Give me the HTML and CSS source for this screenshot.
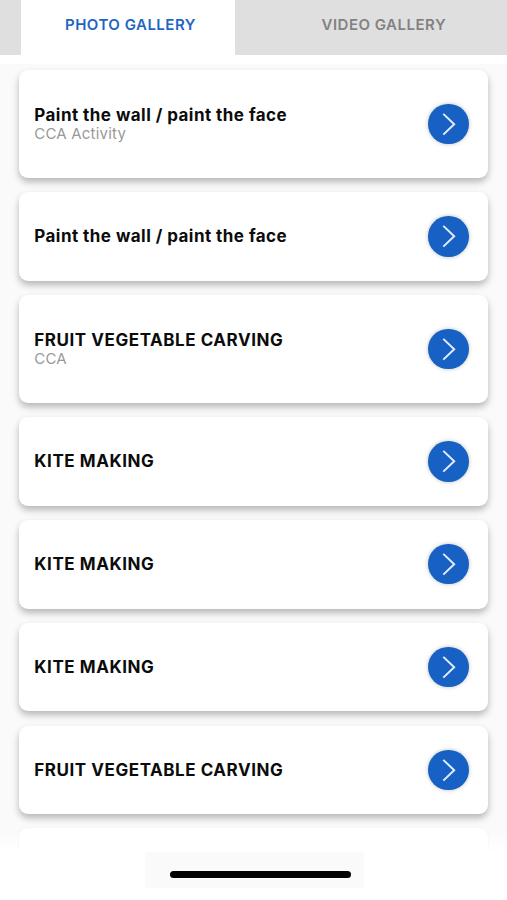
FILE: index.html
```html
<!DOCTYPE html>
<html lang="en">
<head>
  <meta charset="UTF-8" />
  <meta name="viewport" content="width=device-width, initial-scale=1.0"/>
  <title>Gallery</title>
  <link rel="stylesheet" href="styles.css">
</head>
<body>
  <nav class="tabs">
    <div class="tab active">PHOTO GALLERY</div>
    <div class="tab video">VIDEO GALLERY</div>
  </nav>

  <main class="list">
    <div class="card tall">
      <div class="info">
        <h2 class="paint">Paint the wall / paint the face</h2>
        <p>CCA Activity</p>
      </div>
      <div class="go"><svg viewBox="0 0 41 41"><path d="M15.5 10 L26.5 20.5 L15.5 31"/></svg></div>
    </div>
    <div class="card">
      <div class="info">
        <h2 class="paint">Paint the wall / paint the face</h2>
      </div>
      <div class="go"><svg viewBox="0 0 41 41"><path d="M15.5 10 L26.5 20.5 L15.5 31"/></svg></div>
    </div>
    <div class="card tall">
      <div class="info">
        <h2>FRUIT VEGETABLE CARVING</h2>
        <p>CCA</p>
      </div>
      <div class="go"><svg viewBox="0 0 41 41"><path d="M15.5 10 L26.5 20.5 L15.5 31"/></svg></div>
    </div>
    <div class="card">
      <div class="info">
        <h2>KITE MAKING</h2>
      </div>
      <div class="go"><svg viewBox="0 0 41 41"><path d="M15.5 10 L26.5 20.5 L15.5 31"/></svg></div>
    </div>
    <div class="card">
      <div class="info">
        <h2>KITE MAKING</h2>
      </div>
      <div class="go"><svg viewBox="0 0 41 41"><path d="M15.5 10 L26.5 20.5 L15.5 31"/></svg></div>
    </div>
    <div class="card">
      <div class="info">
        <h2>KITE MAKING</h2>
      </div>
      <div class="go"><svg viewBox="0 0 41 41"><path d="M15.5 10 L26.5 20.5 L15.5 31"/></svg></div>
    </div>
    <div class="card">
      <div class="info">
        <h2>FRUIT VEGETABLE CARVING</h2>
      </div>
      <div class="go"><svg viewBox="0 0 41 41"><path d="M15.5 10 L26.5 20.5 L15.5 31"/></svg></div>
    </div>
    <!-- next card, cut off by the bottom bar -->
    <div class="card last"></div>
  </main>

  <footer class="bottom">
    <div class="home"><span class="bar"></span></div>
  </footer>
</body>
</html>
```
FILE: styles.css
```css
* {
  margin: 0;
  padding: 0;
  box-sizing: border-box;
}

body {
  font-family: 'Inter', sans-serif;
  background: #fff;
  height: 100vh;
  display: flex;
  flex-direction: column;
  overflow: hidden;
}

.tabs {
  display: flex;
  flex: none;
  height: 55px;
  padding-left: 21px;
  background: #dfdfdf;
  margin-bottom: 9px;
}

.tab {
  width: 213.5px;
  padding-left: 44px;
  font-size: 15px;
  font-weight: 600;
  line-height: 50px;
  letter-spacing: 0.5px;
  white-space: nowrap;
  color: #828282;
}

.tab.active {
  background: #fff;
  color: #1f66c1;
}

.tab.video {
  margin-left: 43px;
}

.list {
  flex: 1;
  min-height: 0;
  padding: 6px 19px 0;
  display: flex;
  flex-direction: column;
  gap: 14.2px;
  overflow: hidden;
  background: linear-gradient(#fafafa 768px, #fff 788px);
}

.card {
  flex: none;
  height: 88.6px;
  padding: 0 19.5px 0 15.3px;
  display: flex;
  align-items: center;
  justify-content: space-between;
  background: #fff;
  border-radius: 9px;
  box-shadow: 0 4px 7px rgba(0, 0, 0, 0.27);
}

.card.tall {
  height: 108px;
}

.card.last {
  box-shadow: 0 0 3px rgba(0, 0, 0, 0.04);
}

.info h2 {
  font-size: 17px;
  font-weight: 650;
  line-height: 20px;
  letter-spacing: 0.55px;
  color: #0c0c0c;
}

.info h2.paint {
  letter-spacing: 0.45px;
}

.info p {
  font-size: 15px;
  line-height: 18px;
  letter-spacing: 0.2px;
  color: #999;
}

.go {
  width: 40.5px;
  height: 40.5px;
  border-radius: 50%;
  background: #1861c4;
  box-shadow: 0 0 4px rgba(0, 0, 0, 0.25);
}

.go svg {
  display: block;
  fill: none;
  stroke: #e2eeff;
  stroke-width: 2;
}

.bottom {
  flex: none;
  height: 48px;
  display: flex;
  justify-content: center;
  background: #fff;
}

.home {
  width: 219px;
  height: 36px;
  margin-left: 2px;
  padding: 19px 13px 0 25px;
  background: #fafafa;
}

.bar {
  display: block;
  height: 7px;
  border-radius: 4px;
  background: #000;
}
```
